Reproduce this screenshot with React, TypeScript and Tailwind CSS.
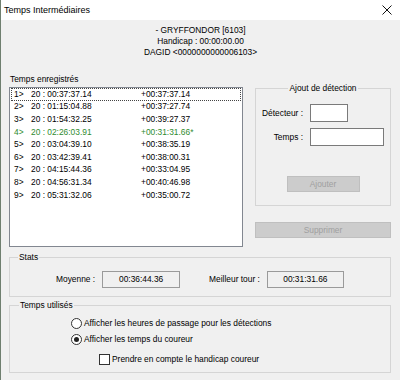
const rows: [string, string, string][] = [
  ['1>', '20 : 00:37:37.14', '+00:37:37.14'],
  ['2>', '20 : 01:15:04.88', '+00:37:27.74'],
  ['3>', '20 : 01:54:32.25', '+00:39:27.37'],
  ['4>', '20 : 02:26:03.91', '+00:31:31.66*'],
  ['5>', '20 : 03:04:39.10', '+00:38:35.19'],
  ['6>', '20 : 03:42:39.41', '+00:38:00.31'],
  ['7>', '20 : 04:15:44.36', '+00:33:04.95'],
  ['8>', '20 : 04:56:31.34', '+00:40:46.98'],
  ['9>', '20 : 05:31:32.06', '+00:35:00.72'],
];

function Radio({ checked, label }: { checked?: boolean; label: string }) {
  return (
    <div className="flex items-center gap-[2px] h-[11px]">
      <span className="w-[11px] h-[11px] rounded-full border border-[#333] bg-white flex items-center justify-center">
        {checked && <span className="w-[5px] h-[5px] rounded-full bg-[#222]" />}
      </span>
      <span>{label}</span>
    </div>
  );
}

export default function App() {
  return (
    <div className="w-[400px] h-[380px] overflow-hidden bg-[#f0f0f0] border-l border-[#6f7f6f] text-black text-[8.4px] leading-[11px] font-['Liberation_Sans',Arial,sans-serif]">
      {/* Title bar */}
      <div className="h-[20px] bg-white flex items-center justify-between pl-[3px] pr-[8px]">
        <span className="text-[9px]">Temps Intermédiaires</span>
        <svg width="10" height="10" viewBox="0 0 10 10">
          <path d="M0.5 0.5 L9.5 9.5 M9.5 0.5 L0.5 9.5" stroke="#111" strokeWidth="1" />
        </svg>
      </div>

      {/* Runner header */}
      <div className="pt-[5px] flex flex-col items-center">
        <span>- GRYFFONDOR [6103]</span>
        <span>Handicap : 00:00:00.00</span>
        <span>DAGID &lt;0000000000006103&gt;</span>
      </div>

      {/* Main */}
      <div className="mt-[16px] flex pl-[8px]">
        <div className="w-[234px]">
          <div className="h-[13px] pl-[1px]">Temps enregistrés</div>
          <div className="h-[160px] border border-[#828790] bg-white px-[1px]">
            {rows.map(([n, t, d], i) => (
              <div
                key={n}
                className={`h-[12.6px] flex items-center pl-[2px] border ${
                  i === 0 ? 'border-dotted border-[#444]' : 'border-transparent'
                } ${i === 3 ? 'text-[#2e8b2e]' : ''}`}
              >
                <span className="w-[17px]">{n}</span>
                <span className="w-[110px]">{t}</span>
                <span>{d}</span>
              </div>
            ))}
          </div>
        </div>

        <div className="ml-[12px] w-[136px]">
          <fieldset className="mt-[9px] border border-[#d5d5d5] p-0">
            <legend className="mx-auto px-[1px]">Ajout de détection</legend>
            <div className="pt-[10px] pb-[13px]">
              <div className="flex items-center gap-[7px]">
                <span className="w-[47px] text-right">Détecteur :</span>
                <div className="w-[38px] h-[18px] bg-white border border-[#7a7a7a]" />
              </div>
              <div className="flex items-center gap-[7px] mt-[6px]">
                <span className="w-[47px] text-right">Temps :</span>
                <div className="w-[74px] h-[18px] bg-white border border-[#7a7a7a]" />
              </div>
              <div className="mt-[30px] mx-auto w-[73px] h-[16px] bg-[#cccccc] border border-[#bfbfbf] text-[#a0a0a0] flex items-center justify-center">
                Ajouter
              </div>
            </div>
          </fieldset>
          <div className="mt-[16px] h-[16px] bg-[#cccccc] border border-[#bfbfbf] text-[#a0a0a0] flex items-center justify-center">
            Supprimer
          </div>
        </div>
      </div>

      {/* Stats */}
      <fieldset className="mt-[5px] ml-[8px] w-[382px] border border-[#d5d5d5] p-0">
        <legend className="ml-[8px] px-[1px]">Stats</legend>
        <div className="pt-[8px] pb-[8px] pl-[46px] flex items-center">
          <span>Moyenne :</span>
          <div className="ml-[7px] w-[78px] h-[17px] border border-[#9a9a9a] flex items-center justify-center">
            00:36:44.36
          </div>
          <span className="ml-[29px]">Meilleur tour :</span>
          <div className="ml-[7px] w-[77px] h-[17px] border border-[#9a9a9a] flex items-center justify-center">
            00:31:31.66
          </div>
        </div>
      </fieldset>

      {/* Temps utilisés */}
      <fieldset className="mt-[3px] ml-[8px] w-[382px] border border-[#d5d5d5] p-0">
        <legend className="ml-[9px] px-[1px]">Temps utilisés</legend>
        <div className="pt-[7px] pb-[7px]">
          <div className="pl-[61px]">
            <Radio label="Afficher les heures de passage pour les détections" />
          </div>
          <div className="pl-[61px] mt-[5px]">
            <Radio checked label="Afficher les temps du coureur" />
          </div>
          <div className="pl-[89px] mt-[8.5px] flex items-center gap-[2px] h-[11px]">
            <span className="w-[11px] h-[11px] border border-[#333] bg-white" />
            <span>Prendre en compte le handicap coureur</span>
          </div>
        </div>
      </fieldset>
    </div>
  );
}
